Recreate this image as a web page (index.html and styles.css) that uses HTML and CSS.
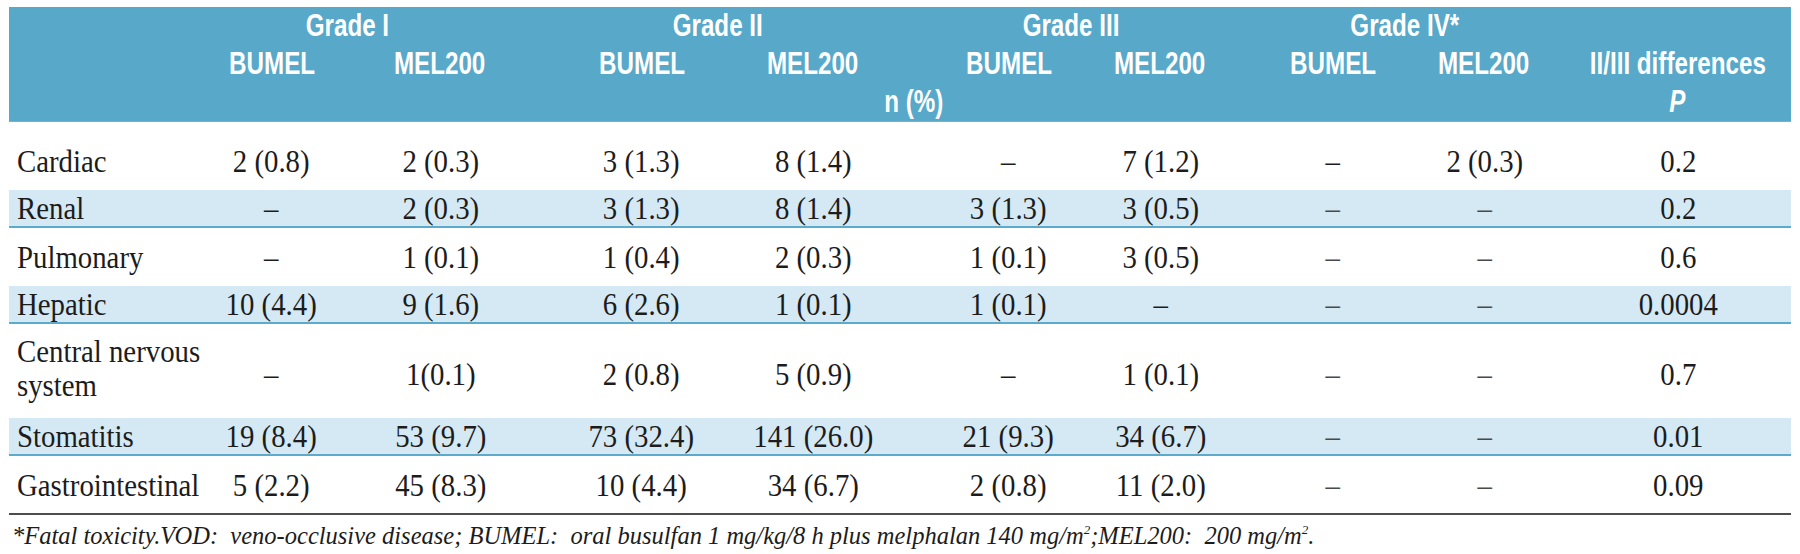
FILE: index.html
```html
<!DOCTYPE html>
<html lang="en">
<head>
<meta charset="utf-8">
<title>Toxicity by grade</title>
<link rel="stylesheet" href="styles.css">
</head>
<body>
<div class="page">
  <div class="tbl">
    <div class="thead">
      <div class="hrow cols">
        <div class="grade span-a"><span class="hl">Grade I</span></div>
        <div class="grade span-b"><span class="hl">Grade II</span></div>
        <div class="grade span-c"><span class="hl">Grade III</span></div>
        <div class="grade span-d"><span class="hl">Grade IV*</span></div>
      </div>
      <div class="hrow cols">
        <div class="blank"></div>
        <div class="bu"><span class="hl">BUMEL</span></div>
        <div class="me"><span class="hl">MEL200</span></div>
        <div class="bu"><span class="hl">BUMEL</span></div>
        <div class="me"><span class="hl">MEL200</span></div>
        <div class="bu"><span class="hl">BUMEL</span></div>
        <div class="me"><span class="hl">MEL200</span></div>
        <div class="bu"><span class="hl">BUMEL</span></div>
        <div class="me"><span class="hl">MEL200</span></div>
        <div class="pc"><span class="hl">II/III differences</span></div>
      </div>
      <div class="hrow cols">
        <div class="npct"><span class="hl">n (%)</span></div>
        <div class="pc pcol"><span class="hl"><i>P</i></span></div>
      </div>
    </div>

    <div class="tbody">
      <div class="row cols">
        <div class="lab">Cardiac</div>
        <div class="bu">2 (0.8)</div><div class="me">2 (0.3)</div>
        <div class="bu">3 (1.3)</div><div class="me">8 (1.4)</div>
        <div class="bu">–</div><div class="me">7 (1.2)</div>
        <div class="bu">–</div><div class="me">2 (0.3)</div>
        <div class="pc">0.2</div>
      </div>
      <div class="row cols band">
        <div class="lab">Renal</div>
        <div class="bu">–</div><div class="me">2 (0.3)</div>
        <div class="bu">3 (1.3)</div><div class="me">8 (1.4)</div>
        <div class="bu">3 (1.3)</div><div class="me">3 (0.5)</div>
        <div class="bu dim">–</div><div class="me dim">–</div>
        <div class="pc">0.2</div>
      </div>
      <div class="row cols">
        <div class="lab">Pulmonary</div>
        <div class="bu">–</div><div class="me">1 (0.1)</div>
        <div class="bu">1 (0.4)</div><div class="me">2 (0.3)</div>
        <div class="bu">1 (0.1)</div><div class="me">3 (0.5)</div>
        <div class="bu dim">–</div><div class="me dim">–</div>
        <div class="pc">0.6</div>
      </div>
      <div class="row cols band">
        <div class="lab">Hepatic</div>
        <div class="bu">10 (4.4)</div><div class="me">9 (1.6)</div>
        <div class="bu">6 (2.6)</div><div class="me">1 (0.1)</div>
        <div class="bu">1 (0.1)</div><div class="me">–</div>
        <div class="bu dim">–</div><div class="me dim">–</div>
        <div class="pc">0.0004</div>
      </div>
      <div class="row cols tall">
        <div class="lab two">Central nervous<br>system</div>
        <div class="bu">–</div><div class="me">1(0.1)</div>
        <div class="bu">2 (0.8)</div><div class="me">5 (0.9)</div>
        <div class="bu">–</div><div class="me">1 (0.1)</div>
        <div class="bu dim">–</div><div class="me dim">–</div>
        <div class="pc">0.7</div>
      </div>
      <div class="row cols band">
        <div class="lab">Stomatitis</div>
        <div class="bu">19 (8.4)</div><div class="me">53 (9.7)</div>
        <div class="bu">73 (32.4)</div><div class="me">141 (26.0)</div>
        <div class="bu">21 (9.3)</div><div class="me">34 (6.7)</div>
        <div class="bu dim">–</div><div class="me dim">–</div>
        <div class="pc">0.01</div>
      </div>
      <div class="row cols">
        <div class="lab">Gastrointestinal</div>
        <div class="bu">5 (2.2)</div><div class="me">45 (8.3)</div>
        <div class="bu">10 (4.4)</div><div class="me">34 (6.7)</div>
        <div class="bu">2 (0.8)</div><div class="me">11 (2.0)</div>
        <div class="bu dim">–</div><div class="me dim">–</div>
        <div class="pc">0.09</div>
      </div>
    </div>

    <p class="foot">*Fatal toxicity.VOD:&nbsp; veno-occlusive disease; BUMEL:&nbsp; oral busulfan 1 mg/kg/8 h plus melphalan 140 mg/m<sup>2</sup>;MEL200:&nbsp; 200 mg/m<sup>2</sup>.</p>
  </div>
</div>
</body>
</html>
```

FILE: styles.css
```css
* {
  box-sizing: border-box;
}

body {
  margin: 0;
  background: #ffffff;
}

.page {
  padding: 7px 9px 0 9px;
}

.tbl {
  width: 1782px;
}

.cols {
  display: grid;
  grid-template-columns: 163px 184px 184px 188px 185px 176px 158px 157px 176px 211px;
}

/* ---------- header ---------- */
.thead {
  background: #58a8ca;
  color: #ffffff;
  font-family: "Liberation Sans", Arial, sans-serif;
  font-weight: 700;
  font-size: 31px;
  height: 115px;
  border-bottom: 1px solid #6fb6d4;
}

.hrow {
  height: 38px;
  white-space: nowrap;
}

.hrow > div {
  display: flex;
  justify-content: center;
  align-items: center;
  height: 38px;
}

.hl {
  display: inline-block;
  line-height: 38px;
  transform: scaleX(0.78);
  transform-origin: center;
}

.grade {
  padding-right: 18px;
}

.span-a { grid-column: 2 / span 2; }
.span-b { grid-column: 4 / span 2; }
.span-c { grid-column: 6 / span 2; }
.span-d { grid-column: 8 / span 2; }

.npct {
  grid-column: 5 / span 2;
  padding-left: 10px;
}

.pcol {
  grid-column: 10;
}

.pcol i {
  font-style: italic;
}

/* column text offsets shared by header and body */
.bu {
  padding-left: 16px;
  text-align: center;
}

.me {
  padding-right: 16px;
  text-align: center;
}

.pc {
  padding-right: 16px;
  text-align: center;
}

/* ---------- body ---------- */
.tbody {
  display: flex;
  flex-direction: column;
  gap: 10px;
  padding: 20px 0 9px 0;
  border-bottom: 2px solid #4d4d4d;
  font-family: "Liberation Serif", "Times New Roman", serif;
  font-size: 32px;
  color: #1c1c1c;
}

.row {
  height: 38px;
  align-items: center;
  white-space: nowrap;
}

.row > div {
  transform: scaleX(0.9);
  transform-origin: center;
}

.row > .lab {
  transform-origin: 8px center;
}

.row.band {
  background: #d4e9f4;
  border-bottom: 2px solid #5cabcd;
}

.row.tall {
  height: 74px;
}

.lab {
  padding-left: 8px;
}

.lab.two {
  line-height: 34px;
  padding-bottom: 12px;
}

.dim {
  color: #4a4a4a;
}

/* ---------- footnote ---------- */
.foot {
  margin: 0;
  padding: 8px 0 0 3px;
  font-family: "Liberation Serif", "Times New Roman", serif;
  font-style: italic;
  font-size: 24.5px;
  line-height: 26px;
  color: #1c1c1c;
  white-space: nowrap;
}

.foot sup {
  font-size: 13px;
  line-height: 0;
  vertical-align: 10px;
}
```
